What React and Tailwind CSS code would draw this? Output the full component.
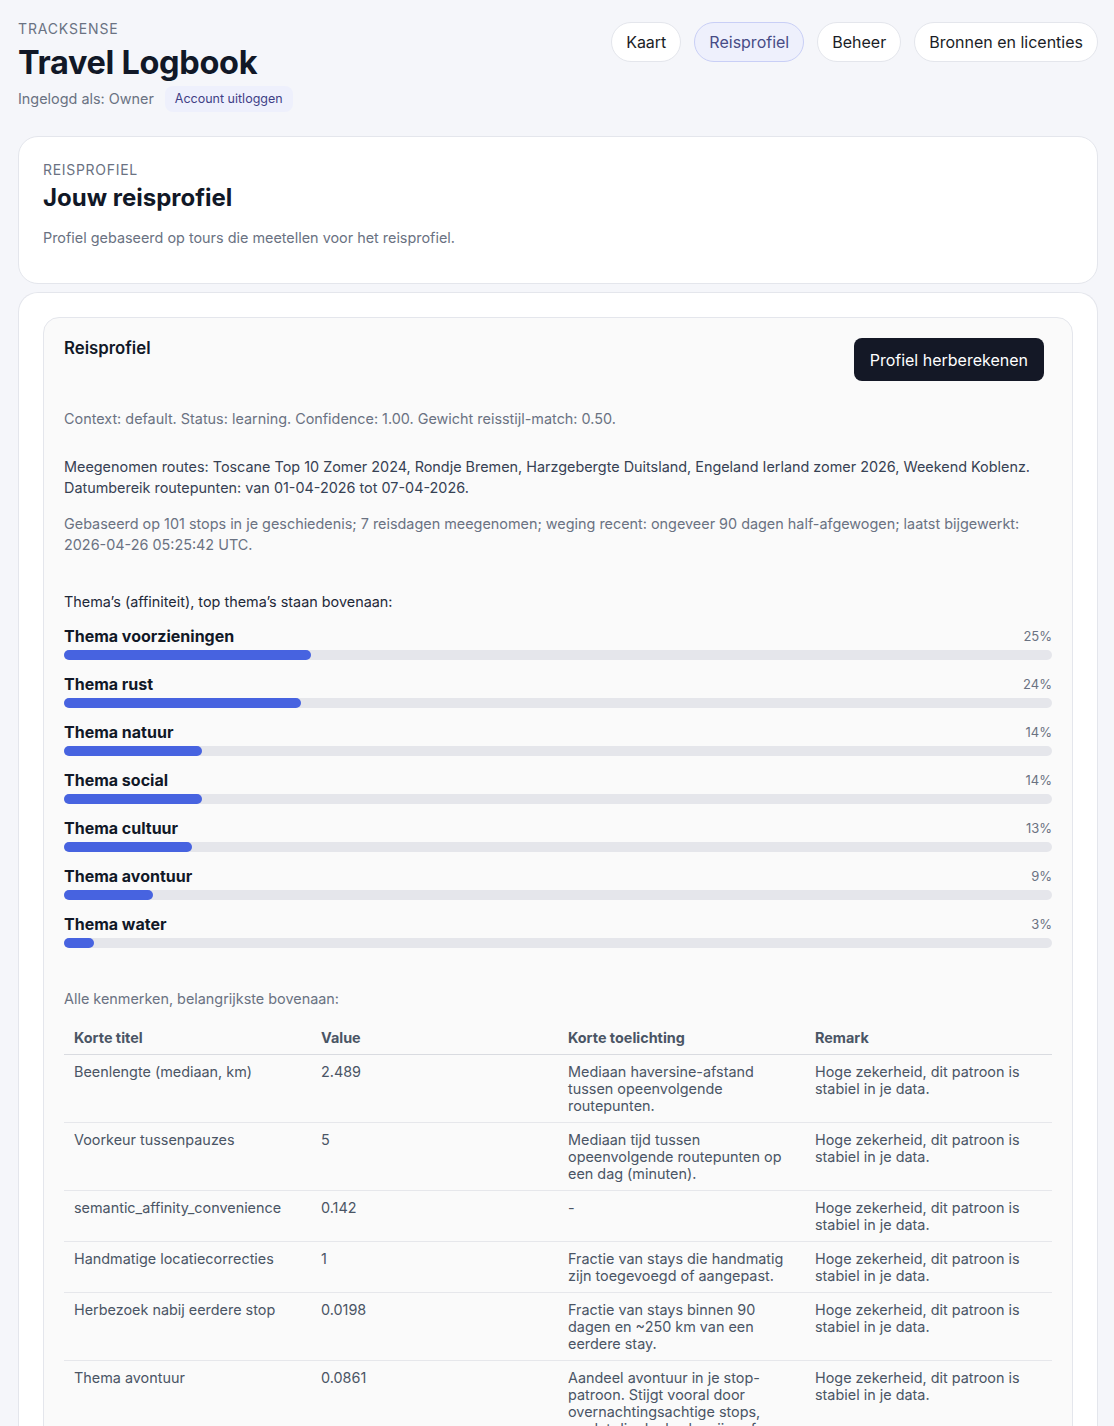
import React from "react";

const themes = [
  { name: "Thema voorzieningen", pct: 25 },
  { name: "Thema rust", pct: 24 },
  { name: "Thema natuur", pct: 14 },
  { name: "Thema social", pct: 14 },
  { name: "Thema cultuur", pct: 13 },
  { name: "Thema avontuur", pct: 9 },
  { name: "Thema water", pct: 3 },
];

const remark = "Hoge zekerheid, dit patroon is stabiel in je data.";

const features = [
  ["Beenlengte (mediaan, km)", "2.489", "Mediaan haversine-afstand tussen opeenvolgende routepunten.", remark],
  ["Voorkeur tussenpauzes", "5", "Mediaan tijd tussen opeenvolgende routepunten op een dag (minuten).", remark],
  ["semantic_affinity_convenience", "0.142", "-", remark],
  ["Handmatige locatiecorrecties", "1", "Fractie van stays die handmatig zijn toegevoegd of aangepast.", remark],
  ["Herbezoek nabij eerdere stop", "0.0198", "Fractie van stays binnen 90 dagen en ~250 km van een eerdere stay.", remark],
  [
    "Thema avontuur",
    "0.0861",
    "Aandeel avontuur in je stop-patroon. Stijgt vooral door overnachtingsachtige stops, omdat die deels als vrijer of avontuurlijker reizen worden geteld.",
    remark,
  ],
  ["Thema water", "0.0312", "Aandeel water in je stop-patroon (kust, meren en rivieren).", remark],
];

const navItems = [
  { label: "Kaart" },
  { label: "Reisprofiel", active: true },
  { label: "Beheer" },
  { label: "Bronnen en licenties" },
];

function NavPill({ label, active }) {
  return (
    <button
      className={
        active
          ? "h-10 rounded-full border border-[#c9cff6] bg-[#eef0fc] px-[14px] text-[16px] text-[#474c86]"
          : "h-10 rounded-full border border-[#e4e6ec] bg-white px-[14px] text-[16px] text-[#1a1d26]"
      }
    >
      {label}
    </button>
  );
}

function ThemeBar({ name, pct }) {
  return (
    <div className="mt-[12px]">
      <div className="flex items-center justify-between">
        <span className="text-[16px] font-bold leading-6 text-[#111827]">{name}</span>
        <span className="text-[13px] leading-6 text-gray-500">{pct}%</span>
      </div>
      <div className="mt-[2px] h-[10px] w-full rounded-full bg-[#e5e6eb]">
        <div className="h-[10px] rounded-full bg-[#4763e0]" style={{ width: `${pct}%` }} />
      </div>
    </div>
  );
}

export default function App() {
  return (
    <div
      className="min-h-screen bg-[#f5f6fa] pl-[18px] pr-[16px] pt-[19px]"
      style={{ fontFamily: "Inter, 'Noto Sans', sans-serif" }}
    >
      {/* top bar */}
      <header className="flex items-start justify-between">
        <div>
          <div className="text-[14px] leading-5 tracking-[0.06em] text-gray-500">TRACKSENSE</div>
          <h1 className="mt-[4px] text-[32.5px] font-bold leading-[40px] tracking-[-0.01em] text-[#111827]">
            Travel Logbook
          </h1>
          <div className="mt-[3px] flex items-center gap-[11px]">
            <span className="text-[14.4px] text-gray-500">Ingelogd als: Owner</span>
            <span className="rounded-[8px] bg-[#eef0fc] px-[10px] py-[5px] text-[12.5px] leading-4 text-[#3f3f86]">
              Account uitloggen
            </span>
          </div>
        </div>
        <nav className="mt-[3px] flex gap-[13px]">
          {navItems.map((n) => (
            <NavPill key={n.label} {...n} />
          ))}
        </nav>
      </header>

      {/* intro card */}
      <section className="mt-[24px] rounded-[20px] border border-[#e4e6ec] bg-white px-[24px] pb-[35px] pt-[23px]">
        <div className="text-[14px] leading-5 tracking-[0.05em] text-gray-500">REISPROFIEL</div>
        <h2 className="mt-[2px] text-[24px] font-bold leading-8 text-[#111827]">Jouw reisprofiel</h2>
        <p className="mt-[14px] text-[14.4px] leading-5 text-gray-500">
          Profiel gebaseerd op tours die meetellen voor het reisprofiel.
        </p>
      </section>

      {/* profile card */}
      <section className="mt-[8px] rounded-t-[20px] border border-b-0 border-[#e4e6ec] bg-white px-[24px] pb-[40px] pt-[24px]">
        <div className="rounded-2xl border border-[#e4e6ec] bg-[#fafafa] px-[20px] pb-[30px] pt-[20px]">
          <div className="flex items-start justify-between">
            <h3 className="text-[16.8px] font-semibold leading-5 text-[#111827]">Reisprofiel</h3>
            <button className="mr-[8px] h-[43px] rounded-[8px] bg-[#141826] px-[16px] text-[16px] text-white">
              Profiel herberekenen
            </button>
          </div>

          <p className="mt-[28px] text-[14.4px] leading-5 text-gray-500">
            Context: default. Status: learning. Confidence: 1.00. Gewicht reisstijl-match: 0.50.
          </p>
          <p className="mt-[27px] text-[14.4px] leading-[21px] text-gray-700">
            Meegenomen routes: Toscane Top 10 Zomer 2024, Rondje Bremen, Harzgebergte Duitsland, Engeland Ierland zomer
            2026, Weekend Koblenz.
            <br />
            Datumbereik routepunten: van 01-04-2026 tot 07-04-2026.
          </p>
          <p className="mt-[15px] text-[14.4px] leading-[21px] text-gray-500">
            Gebaseerd op 101 stops in je geschiedenis; 7 reisdagen meegenomen; weging recent: ongeveer 90 dagen
            half-afgewogen; laatst bijgewerkt: 2026-04-26 05:25:42 UTC.
          </p>

          <p className="mt-[37px] text-[14.4px] leading-5 text-gray-800">
            Thema’s (affiniteit), top thema’s staan bovenaan:
          </p>
          <div>
            {themes.map((t) => (
              <ThemeBar key={t.name} {...t} />
            ))}
          </div>

          <p className="mt-[41px] text-[14.4px] leading-5 text-gray-500">Alle kenmerken, belangrijkste bovenaan:</p>

          <table className="mt-[12px] w-full table-fixed border-collapse text-left text-[14.4px] leading-[17px] text-gray-600">
            <thead>
              <tr className="border-b border-[#d9dbe0]">
                <th className="px-[10px] py-[8px] font-bold">Korte titel</th>
                <th className="px-[10px] py-[8px] font-bold">Value</th>
                <th className="px-[10px] py-[8px] font-bold">Korte toelichting</th>
                <th className="px-[10px] py-[8px] font-bold">Remark</th>
              </tr>
            </thead>
            <tbody>
              {features.map((row, i) => (
                <tr key={i} className="border-b border-[#e6e7eb] align-top">
                  {row.map((cell, j) => (
                    <td key={j} className="px-[10px] py-[8px] font-normal">
                      {cell}
                    </td>
                  ))}
                </tr>
              ))}
            </tbody>
          </table>
        </div>
      </section>
    </div>
  );
}
